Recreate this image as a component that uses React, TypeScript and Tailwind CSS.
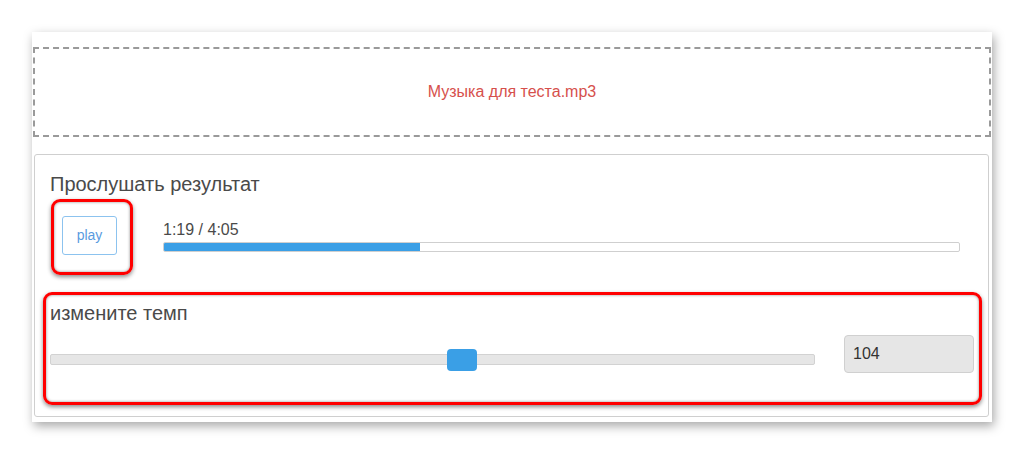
import React from 'react'

const font = { fontFamily: '"Liberation Sans", Arial, sans-serif' }

function Annotation({ className }: { className: string }) {
  return (
    <div
      className={`absolute border-[3px] border-[#ff0000] rounded-[9px] shadow-[0_2px_4px_rgba(0,0,0,0.45),inset_0_0_3px_rgba(0,0,0,0.45)] pointer-events-none ${className}`}
    />
  )
}

export default function App() {
  const progress = 79 / 245

  return (
    <div className="relative w-[1024px] h-[454px] bg-white overflow-hidden pt-[32px] pl-[32px]" style={font}>
      <div className="w-[960px] h-[390px] bg-white shadow-[2px_4px_10px_rgba(0,0,0,0.35)] pt-[15px] flex flex-col">
        {/* drop zone */}
        <div className="mx-[1px] h-[90px] border-2 border-dashed border-[#9a9a9a] flex items-center justify-center">
          <span className="text-[16px] text-[#d6504c]">Музыка для теста.mp3</span>
        </div>

        {/* result panel */}
        <div className="mt-[17px] ml-[2px] mr-[3px] h-[263px] border border-[#cfcfcf] rounded-[3px] pl-[15px] pr-[14px] pt-[18px] flex flex-col">
          <h2 className="text-[20px] leading-[22px] text-[#4a4a4a]">Прослушать результат</h2>

          <div className="flex items-start">
            <button className="ml-[12px] mt-[21px] w-[55px] h-[39px] border border-[#8cc3ef] rounded-[3px] text-[14px] text-[#5a9be0] bg-white">
              play
            </button>
            <div className="ml-[46px] mt-[26px] flex flex-col">
              <span className="text-[16px] leading-[18px] text-[#4a4a4a]">1:19 / 4:05</span>
              <div className="mt-[3px] w-[797px] h-[10px] border border-[#cfcfcf] rounded-[2px] bg-white overflow-hidden">
                <div className="h-full bg-[#3a9fe6]" style={{ width: `${progress * 100}%` }} />
              </div>
            </div>
          </div>

          <h2 className="mt-[47px] text-[20px] leading-[22px] text-[#4a4a4a]">измените темп</h2>

          <div className="mt-[11px] flex items-start">
            <div className="relative mt-[19px] w-[765px] h-[11px] bg-[#e6e6e6] border border-[#d2d2d2] rounded-[2px]">
              <div className="absolute left-[396px] top-[-6px] w-[30px] h-[22px] bg-[#3a9fe6] rounded-[4px]" />
            </div>
            <div className="ml-[29px] w-[130px] h-[38px] bg-[#e6e6e6] border border-[#d0d0d0] rounded-[4px] flex items-center pl-[8px] text-[16px] text-[#333]">
              104
            </div>
          </div>
        </div>
      </div>

      <Annotation className="left-[51px] top-[199px] w-[82px] h-[76px]" />
      <Annotation className="left-[43px] top-[292px] w-[939px] h-[113px]" />
    </div>
  )
}
